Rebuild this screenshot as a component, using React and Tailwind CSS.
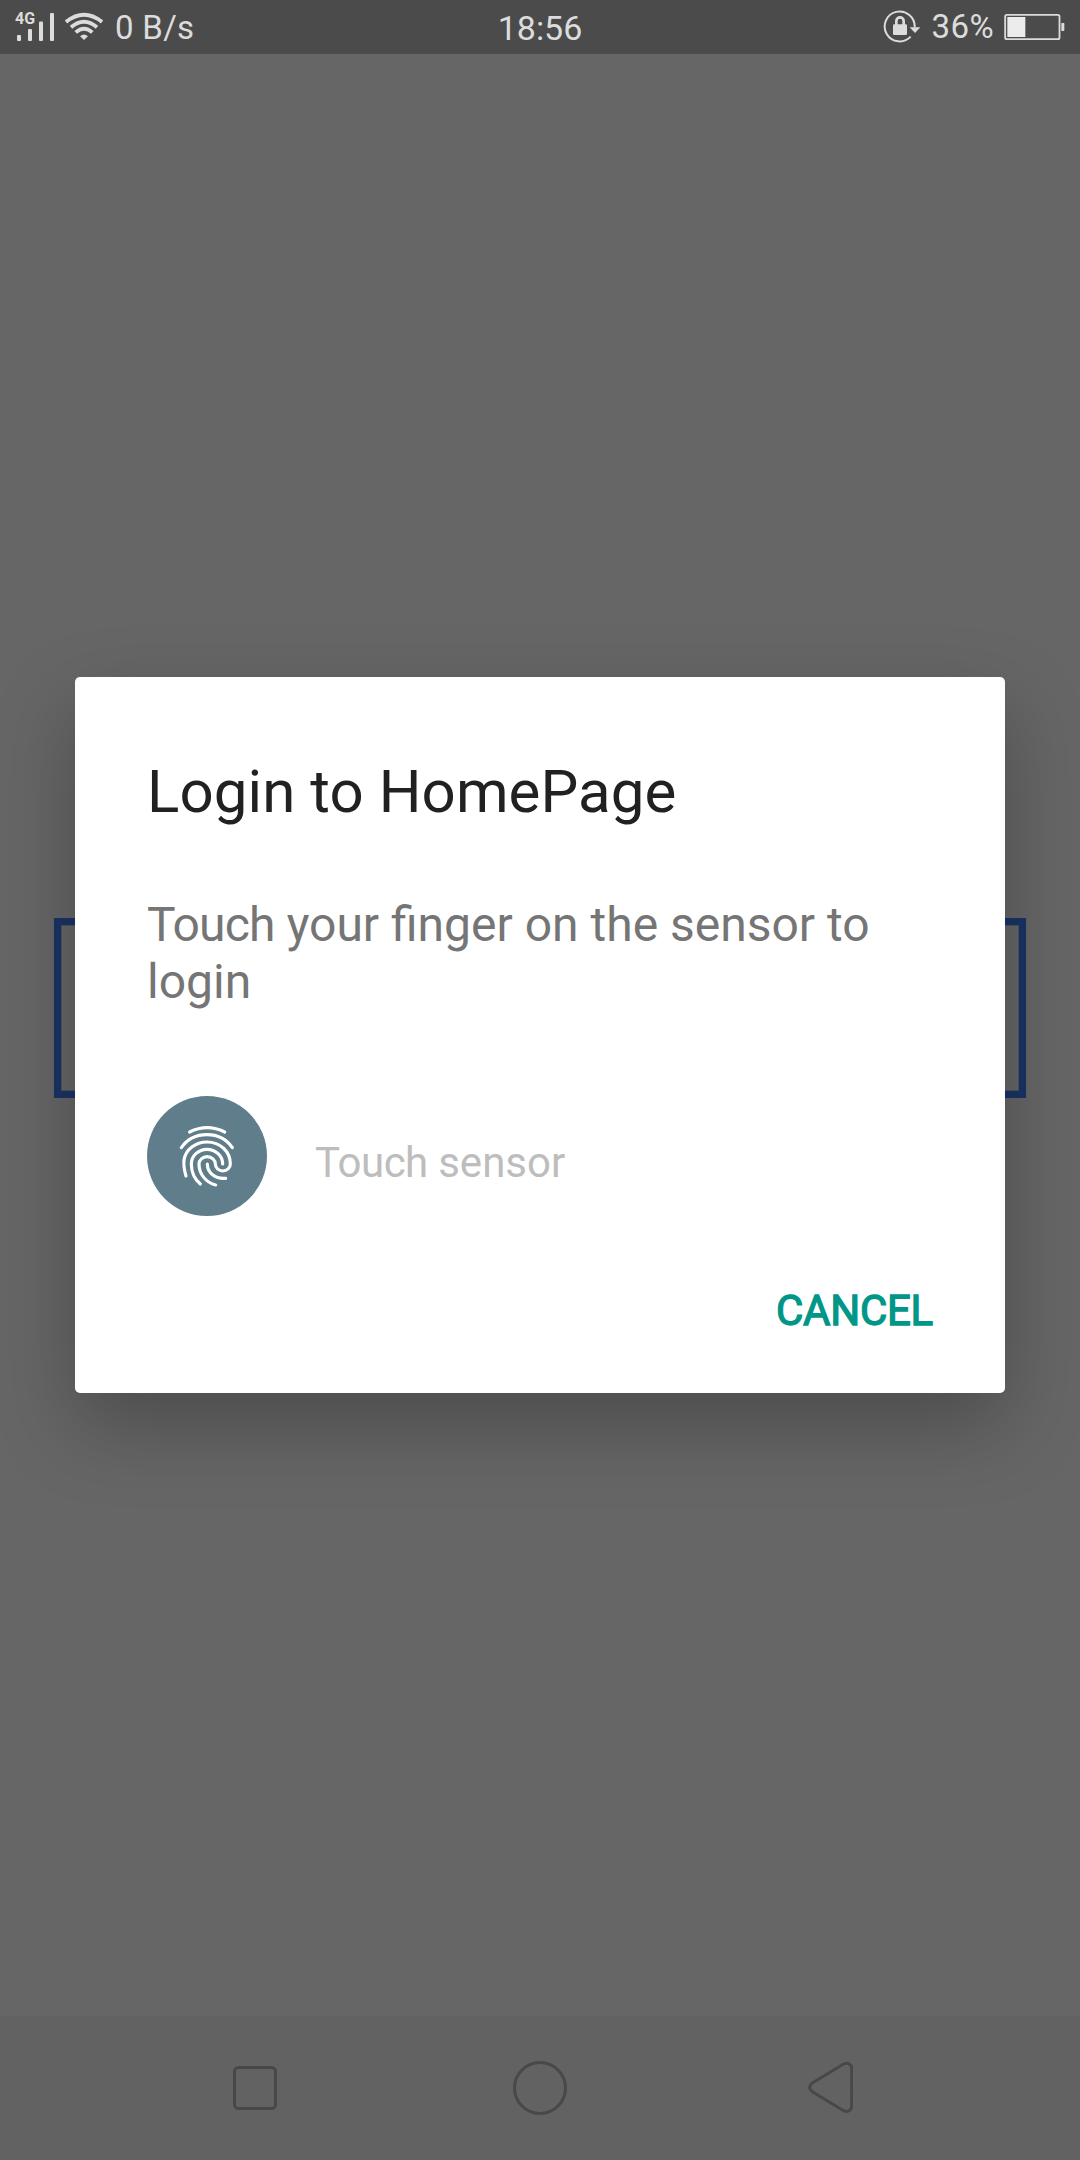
import React from "react";

function SignalIcon() {
  return (
    <div className="relative h-[54px] w-[39px]">
      <span className="absolute left-0 top-[10px] text-[16px] font-bold leading-[17px]">4G</span>
      <svg className="h-[54px] w-[39px]" viewBox="0 0 39 54" fill="currentColor">
        <rect x="2" y="35" width="4" height="6" rx="1" />
        <rect x="13" y="29" width="4" height="12" rx="1" />
        <rect x="24" y="21.500" width="4" height="19.500" rx="1" />
        <rect x="35" y="13" width="4" height="28" rx="1" />
      </svg>
    </div>
  );
}

function WifiIcon() {
  return (
    <svg className="ml-[11px] h-[54px] w-[38px]" viewBox="195 0 114 162" fill="none" stroke="currentColor" strokeWidth="11.5">
      <path d="M198 66 Q252 23 306 66" />
      <path d="M213 82 Q252 49 291 82" />
      <path d="M227 97 Q252 75 277 97" />
      <path d="M240 109 Q252 98 264 109 L252 120Z" fill="currentColor" stroke="none" />
    </svg>
  );
}

function RotationLockIcon() {
  return (
    <svg className="h-[54px] w-[38px]" viewBox="39 0 114 162" fill="none" stroke="currentColor" strokeWidth="6">
      <path d="M122 110 A45 45 0 1 1 134 82" />
      <path d="M119 82 H151 L135 99Z" fill="currentColor" stroke="none" />
      <rect x="69" y="73" width="42" height="32" rx="4" fill="currentColor" stroke="none" />
      <path d="M79 75 V63 A11 11 0 0 1 101 63 V75" strokeWidth="8" />
    </svg>
  );
}

function BatteryIcon() {
  return (
    <svg className="ml-[10px] h-[54px] w-[61px]" viewBox="401 0 183 162" fill="none">
      <rect x="404.5" y="44.500" width="163" height="73" rx="5" stroke="currentColor" strokeWidth="5.5" />
      <rect x="411" y="51" width="54" height="60" fill="#ececec" />
      <rect x="573" y="69" width="9" height="24" rx="2" fill="currentColor" />
    </svg>
  );
}

function StatusBar() {
  return (
    <header className="flex h-[54px] items-center bg-[#4b4b4b] pl-[15px] pr-[15px] text-[33px] leading-[54px] text-[#dcdcdc]">
      <div className="flex flex-1 items-center">
        <SignalIcon />
        <WifiIcon />
        <span className="ml-[12px] pt-[2px] tracking-[0.3px]">0 B/s</span>
      </div>
      <span className="pt-[3px] text-[34px] leading-[51px]">18:56</span>
      <div className="flex flex-1 items-center justify-end">
        <RotationLockIcon />
        <span className="ml-[11px] tracking-[0.4px]">36%</span>
        <BatteryIcon />
      </div>
    </header>
  );
}

function Fingerprint() {
  return (
    <svg className="h-[120px] w-[120px]" viewBox="51 48 360 360" fill="none" stroke="#fff" strokeWidth="9.500" strokeLinecap="round">
      <circle cx="231" cy="228" r="180" fill="#607d8b" stroke="none" />
      <path d="M179 156 Q231 130 284 156" />
      <path d="M154 203 C170 180 197 164 231 164 C265 164 291 180 307 203" />
      <path d="M168 288 C162 268 160 258 162 240 C167 208 197 186 231 186 C270 186 301 214 301 252 A22.500 21 0 0 1 256 252 A24.500 22 0 0 0 207 252 C207 282 228 308 257 315" />
      <path d="M211 312 C192 296 184 274 184 252 C184 228 205 208 231 208 C257 208 278 228 278 252" />
      <path d="M232 252 C232 278 256 298 287 295" />
    </svg>
  );
}

function LoginDialog() {
  return (
    <section className="absolute left-[21px] top-[-241px] flex h-[716px] w-[930px] flex-col rounded-[5px] bg-white px-[72px] shadow-[0_32px_80px_rgba(0,0,0,0.26)]">
      <h1 className="mt-[80px] text-[60px] leading-[70px] tracking-[0.08px] text-[#212121]">Login to HomePage</h1>
      <p className="mt-[69px] text-[48px] leading-[57px] text-[#757575]">
        <span className="block whitespace-nowrap">
          <span className="tracking-[-0.8px]">Touch</span> your finger on the sensor to
        </span>{" "}
        <span className="block">login</span>
      </p>
      <div className="mt-[86px] flex h-[120px] items-center">
        <Fingerprint />
        <span className="ml-[48px] mt-[13px] text-[42px] leading-[50px] text-[#bdbdbd]">
          <span className="tracking-[-0.5px]">Touch</span> sensor
        </span>
      </div>
      <button className="mt-[70px] self-end text-[42px] font-normal leading-[50px] tracking-[-0.25px] text-[#009688] [-webkit-text-stroke:1.3px_#009688]">CANCEL</button>
    </section>
  );
}

function NavigationBar() {
  return (
    <nav className="flex h-[144px] items-center bg-[#626262] pl-[233px] text-[#484848]">
      <svg className="h-[44px] w-[44px]" viewBox="0 0 44 44" fill="none" stroke="currentColor" strokeWidth="3">
        <rect x="1.500" y="1.500" width="41" height="41" rx="4" />
      </svg>
      <svg className="ml-[236px] h-[54px] w-[54px]" viewBox="0 0 54 54" fill="none" stroke="currentColor" strokeWidth="3">
        <circle cx="27" cy="27" r="25.500" />
      </svg>
      <svg className="ml-[240px] h-[54px] w-[46px]" viewBox="81 183 138 162" fill="none" stroke="currentColor" strokeWidth="9">
        <path d="M191 192 L97 249 Q80 262 97 275 L191 332 Q201 337 209 331 Q215 327 215 318 V206 Q215 197 209 193 Q201 187 191 192Z" />
      </svg>
    </nav>
  );
}

export default function App() {
  return (
    <div className="flex h-[2160px] w-[1080px] flex-col overflow-hidden bg-[#666666] font-['Roboto',sans-serif]">
      <StatusBar />
      <main className="flex-1 px-[54px] pt-[864px]">
        <div className="relative h-[180px]">
          <div className="h-full border-[7px] border-[#1a3466] shadow-[inset_0_0_0_1px_#4e5560]" />
          <LoginDialog />
        </div>
      </main>
      <NavigationBar />
    </div>
  );
}
